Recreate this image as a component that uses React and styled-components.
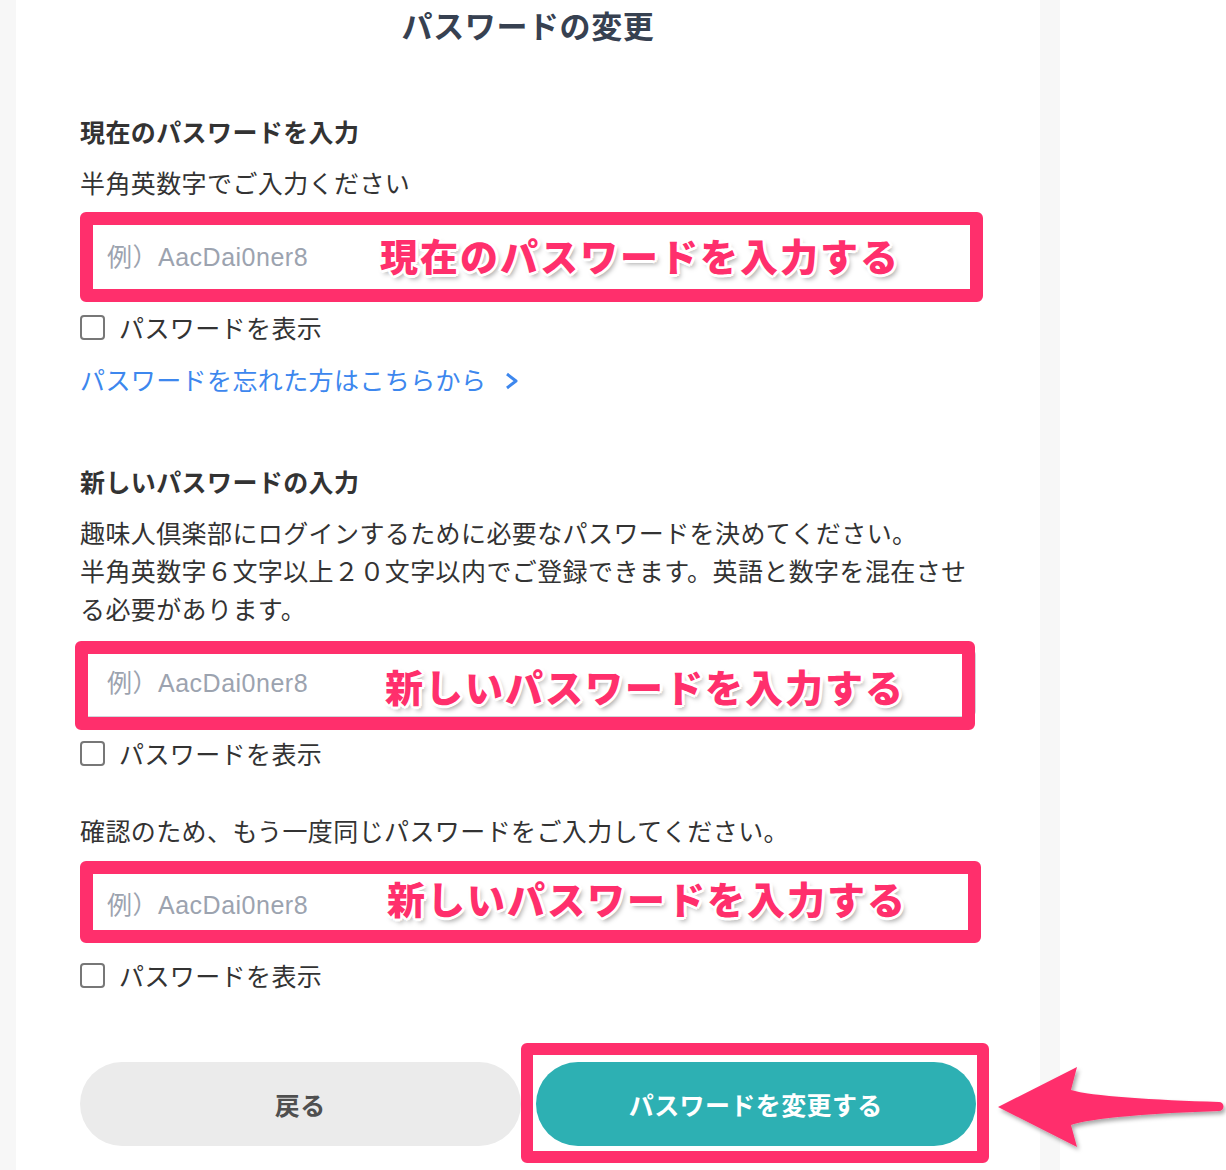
import React from "react";
import styled, { createGlobalStyle } from "styled-components";

const PINK = "#ff2f6c";

const GlobalStyle = createGlobalStyle`
  body {
    margin: 0;
    background: #fff;
    color: #333;
    font-family: "Liberation Sans", "Noto Sans CJK JP", sans-serif;
  }
`;

const Page = styled.div`
  display: flex;
  min-height: 1170px;
  overflow: hidden;
`;

const Backdrop = styled.div`
  display: flex;
  width: 1060px;
  padding: 0 20px 0 16px;
  box-sizing: border-box;
  background: #f7f7f7;
`;

const Panel = styled.main`
  flex: 1;
  background: #fff;
  padding: 0 64px 40px;
`;

const Title = styled.h1`
  margin: 0;
  text-align: center;
  font-family: "Noto Sans CJK JP", sans-serif;
  font-size: 31px;
  line-height: 50px;
  font-weight: 700;
  letter-spacing: 0.6px;
  color: #374151;
`;

const Section = styled.section`
  display: flex;
  flex-direction: column;
  margin-top: ${(p) => p.$top || 0}px;
`;

const Heading = styled.h2`
  margin: 0;
  font-size: 25px;
  line-height: 38px;
  font-weight: 700;
  letter-spacing: 0.4px;
  color: #333;
`;

const Text = styled.p`
  margin: ${(p) => p.$top || 0}px 0 0;
  font-size: 25px;
  line-height: 38px;
  letter-spacing: 0.4px;
  color: #333;
`;

const Field = styled.div`
  position: relative;
  margin-top: 20px;
`;

const Input = styled.input`
  display: block;
  width: 100%;
  height: 68px;
  box-sizing: border-box;
  border: 1px solid #d1d5db;
  border-radius: 6px;
  padding: 0 26px;
  font-family: "Liberation Sans", "Noto Sans CJK JP", sans-serif;
  font-size: 25px;
  letter-spacing: 0.5px;
  color: #333;
  background: #fff;

  &::placeholder {
    color: #9ca3af;
  }
`;

/* hand-drawn pink highlight laid over the real control */
const Callout = styled.div`
  position: absolute;
  top: ${(p) => p.$t}px;
  bottom: ${(p) => p.$b}px;
  left: ${(p) => p.$l}px;
  right: ${(p) => p.$r}px;
  border: ${(p) => p.$w || 13}px solid ${PINK};
  border-radius: 6px;
  display: flex;
  align-items: center;
  padding-left: ${(p) => p.$pad || 0}px;
  pointer-events: none;
`;

const CalloutLabel = styled.span`
  font-family: "Noto Sans CJK JP", sans-serif;
  font-size: 38px;
  font-weight: 900;
  letter-spacing: 2px;
  color: ${PINK};
  white-space: nowrap;
  transform: translateY(${(p) => p.$dy || 0}px);
  text-shadow:
    3px 0 0 #fff, -3px 0 0 #fff, 0 3px 0 #fff, 0 -3px 0 #fff,
    2px 2px 0 #fff, -2px 2px 0 #fff, 2px -2px 0 #fff, -2px -2px 0 #fff,
    3px 4px 5px rgba(0, 0, 0, 0.35);
`;

const CheckRow = styled.label`
  display: flex;
  align-items: center;
  gap: 14px;
  height: 30px;
  margin-top: 21px;
  font-size: 25px;
  letter-spacing: 0.4px;
  color: #333;
`;

const Check = styled.input.attrs({ type: "checkbox" })`
  appearance: none;
  width: 25px;
  height: 25px;
  margin: 0;
  border: 2px solid #777;
  border-radius: 4px;
  background: #fff;
`;

const ForgotLink = styled.a`
  display: inline-flex;
  align-items: center;
  gap: 18px;
  align-self: flex-start;
  margin-top: 20px;
  font-size: 25px;
  line-height: 38px;
  letter-spacing: 0.4px;
  color: #3d87ee;
  text-decoration: none;
`;

const ButtonRow = styled.div`
  position: relative;
  display: grid;
  grid-template-columns: 1fr 1fr;
  gap: 15px;
  margin-top: 72px;
`;

const ButtonSlot = styled.div`
  position: relative;
`;

const Button = styled.button`
  width: 100%;
  height: 84px;
  border: none;
  border-radius: 42px;
  font-family: "Noto Sans CJK JP", sans-serif;
  font-size: 25px;
  font-weight: 700;
  letter-spacing: 0.4px;
  background: ${(p) => (p.$primary ? "#2db0b3" : "#ebebeb")};
  color: ${(p) => (p.$primary ? "#fff" : "#4f4f4f")};
`;

const Arrow = styled.svg`
  position: absolute;
  left: calc(100% + 19px);
  top: -4px;
  overflow: visible;
`;

const Chevron = () => (
  <svg width="16" height="20" viewBox="0 0 16 20">
    <polyline
      points="3,3 12,10 3,17"
      fill="none"
      stroke="#3d87ee"
      strokeWidth="3"
      strokeLinejoin="round"
    />
  </svg>
);

const PasswordField = ({ callout, label }) => (
  <>
    <Field>
      <Input type="password" placeholder="例）AacDai0ner8" />
      <Callout $t={callout.t} $b={callout.b} $l={callout.l} $r={callout.r} $pad={callout.pad}>
        <CalloutLabel $dy={callout.dy}>{label}</CalloutLabel>
      </Callout>
    </Field>
    <CheckRow>
      <Check />
      パスワードを表示
    </CheckRow>
  </>
);

const App = () => {
  return (
    <Page>
      <GlobalStyle />
      <Backdrop>
        <Panel>
          <Title>パスワードの変更</Title>

          <Section $top={64}>
            <Heading>現在のパスワードを入力</Heading>
            <Text $top={13}>半角英数字でご入力ください</Text>
            <PasswordField
              label="現在のパスワードを入力する"
              callout={{ t: -11, b: -11, l: 0, r: -7, pad: 287, dy: -3 }}
            />
            <ForgotLink href="#">
              パスワードを忘れた方はこちらから
              <Chevron />
            </ForgotLink>
          </Section>

          <Section $top={64}>
            <Heading>新しいパスワードの入力</Heading>
            <Text $top={13}>
              趣味人倶楽部にログインするために必要なパスワードを決めてください。
              <br />
              半角英数字６文字以上２０文字以内でご登録できます。英語と数字を混在させる必要があります。
            </Text>
            <PasswordField
              label="新しいパスワードを入力する"
              callout={{ t: -8, b: -13, l: -5, r: 1, pad: 297, dy: 0 }}
            />
            <Text $top={45}>確認のため、もう一度同じパスワードをご入力してください。</Text>
            <PasswordField
              label="新しいパスワードを入力する"
              callout={{ t: -10, b: -4, l: 0, r: -5, pad: 294, dy: -5 }}
            />
          </Section>

          <ButtonRow>
            <Button>戻る</Button>
            <ButtonSlot>
              <Button $primary>パスワードを変更する</Button>
              <Callout $t={-19} $b={-17} $l={-15} $r={-13} $w={12} />
            </ButtonSlot>
            <Arrow width="231" height="95" viewBox="0 0 231 95">
              <defs>
                <filter id="arrowShadow" x="-10%" y="-20%" width="130%" height="150%">
                  <feDropShadow dx="2" dy="3" stdDeviation="2" floodColor="#000" floodOpacity="0.35" />
                </filter>
              </defs>
              <path
                d="M3 49 L82 9 L76 32 C95 38 160 42 224 44 A4.5 4.5 0 0 1 224 53 C160 55 95 60 76 67 L82 89 Z"
                fill={PINK}
                filter="url(#arrowShadow)"
              />
            </Arrow>
          </ButtonRow>
        </Panel>
      </Backdrop>
    </Page>
  );
};

export default App;
